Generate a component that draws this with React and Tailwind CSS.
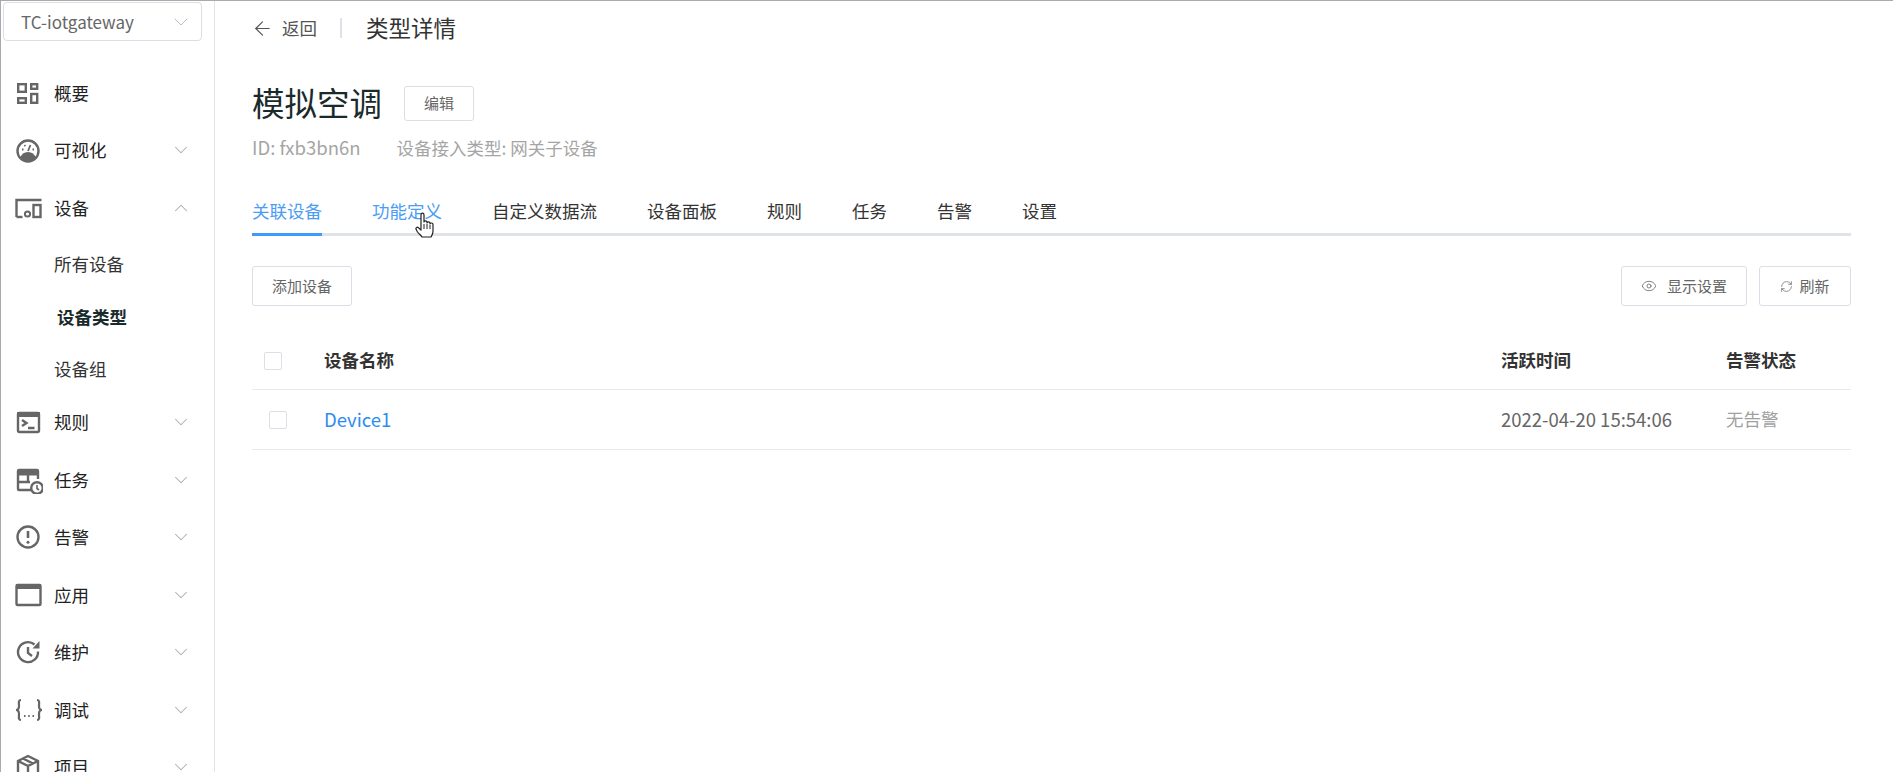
import React from "react";
import { ArrowLeft, ChevronDown, ChevronUp, Eye, RefreshCw } from "lucide-react";

const IconBase = ({ children }) => (
  <svg width="28" height="28" viewBox="1 0 28 28" fill="none" stroke="#666" strokeWidth="2.4">
    {children}
  </svg>
);

const OverviewIcon = () => (
  <IconBase>
    <rect x="4.200" y="5.200" width="7.600" height="7.600" />
    <rect x="17.200" y="5.200" width="6" height="4.600" />
    <rect x="17.200" y="15" width="6" height="8.800" />
    <rect x="4.200" y="19.200" width="7.600" height="4.600" />
  </IconBase>
);

const GaugeIcon = () => (
  <IconBase>
    <circle cx="14" cy="15" r="10.500" />
    <path d="M6 22c1.500-4 4-6 8-6s6.500 2 8 6l-3 3h-10z" fill="#666" stroke="none" />
    <path d="M14 15l2.500-6M8 13.500h1.500M18.500 13.500h1.500M10.500 9l.8 1.200" strokeWidth="1.800" />
  </IconBase>
);

const DeviceIcon = () => (
  <IconBase>
    <path d="M2.500 23V6h25" />
    <path d="M2.500 23h6" />
    <circle cx="13.500" cy="20" r="2.600" strokeWidth="2" />
    <rect x="19.500" y="11" width="7" height="12" />
  </IconBase>
);

const RuleIcon = () => (
  <IconBase>
    <rect x="4" y="5" width="21" height="19" rx="1.500" />
    <rect x="3" y="4" width="23" height="5" fill="#666" stroke="none" />
    <path d="M8 12l4.500 3-4.500 3M14 20h6.500" />
  </IconBase>
);

const TaskIcon = () => (
  <IconBase>
    <path d="M17 24H5a1 1 0 0 1-1-1V5a1 1 0 0 1 1-1h18a1 1 0 0 1 1 1v8" />
    <rect x="4" y="4" width="20" height="5.500" fill="#666" stroke="none" />
    <path d="M4 16h12M14 9v7" />
    <circle cx="23" cy="22" r="5.800" fill="#fff" />
    <path d="M23 19v3.500l2 1.500" strokeWidth="1.600" />
  </IconBase>
);

const AlarmIcon = () => (
  <IconBase>
    <circle cx="14" cy="14" r="10.500" />
    <path d="M14 8v7" strokeWidth="2.600" />
    <circle cx="14" cy="19.200" r="1.500" fill="#666" stroke="none" />
  </IconBase>
);

const AppIcon = () => (
  <IconBase>
    <rect x="2.500" y="4" width="24" height="20" rx="1" />
    <rect x="2" y="3" width="25" height="5" fill="#666" stroke="none" />
  </IconBase>
);

const MaintainIcon = () => (
  <IconBase>
    <path d="M24 13.500a10 10 0 1 1-3.500-7" />
    <path d="M25.500 3v7.500h-7z" fill="#666" stroke="none" />
    <path d="M14 9v6l4 3" />
  </IconBase>
);

const DebugIcon = () => (
  <IconBase>
    <path d="M7 4c-3 0-2 3-2 6 0 3-1 4-3 4 2 0 3 1 3 4s-1 6 2 6M23 4c3 0 2 3 2 6 0 3 1 4 3 4-2 0-3 1-3 4s1 6-2 6" strokeWidth="2.200" />
    <path d="M10 20h1.500M14.200 20h1.500M18.500 20h1.500" strokeWidth="1.800" />
  </IconBase>
);

const ProjectIcon = () => (
  <IconBase>
    <path d="M14 3l10 5v12l-10 5-10-5V8zM4 8l10 5 10-5M14 13v12M9 5.500l10 5" />
  </IconBase>
);

const HandCursor = () => (
  <svg width="20" height="27" viewBox="0 0 20 27" className="absolute left-[414px] top-[211px]">
    <path
      d="M6 13V3c0-2.400 3-2.400 3 0v7c0-1.600 3-1.600 3 0v1c0-1.600 3-1.600 3 0v1c0-1.400 3-1.400 3 .5V19c0 3-1 4-2 6H7c-1-2-3-3-4.500-5L1.200 17.500c-1-2 1.300-3 2.500-1.500L6 18z"
      fill="#fff"
      stroke="#222"
      strokeWidth="1.200"
      strokeLinejoin="round"
    />
    <path d="M9 12v5M12 12v5M15 13v4" stroke="#222" strokeWidth="1" />
  </svg>
);

const navBefore = [
  { label: "概要", icon: OverviewIcon },
  { label: "可视化", icon: GaugeIcon, arrow: "down" },
  { label: "设备", icon: DeviceIcon, arrow: "up" },
];

const navAfter = [
  { label: "规则", icon: RuleIcon, arrow: "down" },
  { label: "任务", icon: TaskIcon, arrow: "down" },
  { label: "告警", icon: AlarmIcon, arrow: "down" },
  { label: "应用", icon: AppIcon, arrow: "down" },
  { label: "维护", icon: MaintainIcon, arrow: "down" },
  { label: "调试", icon: DebugIcon, arrow: "down" },
  { label: "项目", icon: ProjectIcon, arrow: "down" },
];

const tabs = ["关联设备", "功能定义", "自定义数据流", "设备面板", "规则", "任务", "告警", "设置"];

const NavItem = ({ item }) => {
  const Icon = item.icon;
  return (
    <div className="flex h-[57.5px] shrink-0 items-center pl-[14px] pr-[22px] text-[17.5px] text-[#222]">
      <div className="w-[39px]">
        <Icon />
      </div>
      <span className="flex-1">{item.label}</span>
      {item.arrow === "down" && <ChevronDown size={22} strokeWidth={1.1} color="#aaa" />}
      {item.arrow === "up" && <ChevronUp size={22} strokeWidth={1.1} color="#aaa" />}
    </div>
  );
};

const OutlineButton = ({ className, children }) => (
  <button className={`flex items-center justify-center rounded-[3px] border border-[#dcdde6] bg-white text-[15px] text-[#666] ${className}`}>
    {children}
  </button>
);

const Checkbox = ({ className }) => (
  <div className={`h-[18px] w-[18px] rounded-[2px] border border-[#dcdfe6] bg-white ${className}`} />
);

export default function App() {
  return (
    <div
      className="relative flex h-[772px] w-[1893px] overflow-hidden border-t border-l border-[#aaaaaa] bg-white"
      style={{ fontFamily: '"Noto Sans CJK SC", "Noto Sans", sans-serif' }}
    >
      {/* sidebar */}
      <aside className="flex w-[214px] shrink-0 flex-col border-r border-[#e2e2ea] pt-px">
        <div className="mx-[2px] flex h-[39px] w-[199px] shrink-0 items-center justify-between rounded-[4px] border border-[#dcdde6] pl-[17px] pr-[8px] text-[17px] text-[#666]">
          <span>TC-iotgateway</span>
          <ChevronDown size={24} strokeWidth={1} color="#bbb" />
        </div>
        <div className="mt-[23px] flex flex-col">
          {navBefore.map((item) => (
            <NavItem key={item.label} item={item} />
          ))}
          <div className="mt-[1px] -mb-[1.5px] flex flex-col pl-[53px] text-[17.5px] text-[#333]">
            <div className="flex h-[52.5px] items-center">所有设备</div>
            <div className="flex h-[52.5px] items-center pl-[3px] pt-[1px] font-bold text-[#1a2a2a]">设备类型</div>
            <div className="flex h-[52.5px] items-center">设备组</div>
          </div>
          {navAfter.map((item) => (
            <NavItem key={item.label} item={item} />
          ))}
        </div>
      </aside>

      {/* main */}
      <main className="flex flex-1 flex-col pl-[37px] pr-[42px]">
        <div className="flex h-[54px] shrink-0 items-center">
          <ArrowLeft size={23} strokeWidth={1.2} color="#555" className="-ml-[1px]" />
          <span className="ml-[8px] text-[17.5px] text-[#555]">返回</span>
          <div className="ml-[23px] h-[20px] w-[2px] bg-[#dfe1e8]" />
          <span className="ml-[24px] text-[22.5px] text-[#333]">类型详情</span>
        </div>

        <div className="mt-[30px] flex h-[34px] shrink-0 items-center">
          <h1 className="text-[32.500px] font-normal text-[#1a2a2a]">模拟空调</h1>
          <OutlineButton className="ml-[22px] mt-[2px] h-[35px] w-[70px]">编辑</OutlineButton>
        </div>

        <div className="mt-[15px] flex h-[28px] shrink-0 items-center text-[17.5px] text-[#a5a5a5]">
          <span className="text-[18.500px]">ID: fxb3bn6n</span>
          <span className="ml-[36px]">设备接入类型: 网关子设备</span>
        </div>

        {/* tabs */}
        <div className="mt-[20px] flex h-[54px] shrink-0 items-start gap-[50px] border-b-[3px] border-[#e0e3e8] pt-[16px]">
          {tabs.map((tab, i) => (
            <div
              key={tab}
              className={`relative flex h-[35px] items-start text-[17.5px] leading-[26px] ${
                i < 2 ? "text-[#4a9cf5]" : "text-[#333]"
              }`}
            >
              {tab}
              {i === 0 && <div className="absolute left-0 right-0 -bottom-[3px] h-[3px] bg-[#3f9bfa]" />}
            </div>
          ))}
        </div>

        {/* toolbar */}
        <div className="mt-[30px] flex shrink-0 justify-between">
          <OutlineButton className="h-[40px] w-[100px]">添加设备</OutlineButton>
          <div className="flex gap-[12px]">
            <OutlineButton className="h-[40px] w-[126px] gap-[10px]">
              <Eye size={16} strokeWidth={1.2} color="#666" />
              显示设置
            </OutlineButton>
            <OutlineButton className="h-[40px] w-[92px] gap-[6px]">
              <RefreshCw size={13} strokeWidth={1.3} color="#666" />
              刷新
            </OutlineButton>
          </div>
        </div>

        {/* table */}
        <div className="mt-[24px] flex h-[60px] shrink-0 items-center border-b border-[#e9eaf0] pt-[2px] text-[17.5px] font-bold text-[#333]">
          <Checkbox className="ml-[12px]" />
          <span className="ml-[42px] flex-1">设备名称</span>
          <span className="w-[225px]">活跃时间</span>
          <span className="w-[125px]">告警状态</span>
        </div>
        <div className="flex h-[60px] shrink-0 items-center border-b border-[#e9eaf0] text-[17.5px]">
          <Checkbox className="ml-[17px]" />
          <span className="ml-[37px] flex-1 text-[18.500px] text-[#2b8cf0]">Device1</span>
          <span className="w-[225px] text-[18.500px] text-[#666]">2022-04-20 15:54:06</span>
          <span className="w-[125px] text-[#a0a0a0]">无告警</span>
        </div>
      </main>

      <HandCursor />
    </div>
  );
}
